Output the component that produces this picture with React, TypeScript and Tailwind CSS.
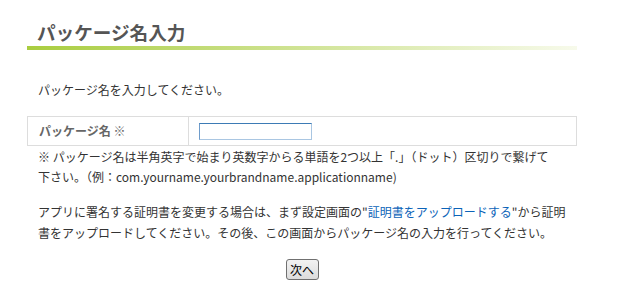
export default function App() {
  return (
    <div
      className="w-[630px] h-[299px] bg-white pt-[20px] text-[12px] text-[#333]"
      style={{ fontFamily: '"Noto Sans CJK JP", "Noto Sans", sans-serif' }}
    >
      <div className="ml-[27px] w-[550px]">
        {/* Title with gradient underline */}
        <h2 className="pl-[10px] text-[18.6px] leading-[24px] font-bold text-[#555]">パッケージ名入力</h2>
        <div className="mt-[2px] h-[4px] bg-[linear-gradient(to_right,#a9cd3f,#f7faeb)]" />

        <p className="mt-[30px] pl-[11px] leading-[20px]">パッケージ名を入力してください。</p>

        {/* Form table */}
        <div className="mt-[16px] flex h-[30px] border border-[#ddd]">
          <div className="w-[161px] flex items-center pl-[11px] border-r border-[#ddd] font-bold text-[#666]">
            パッケージ名 ※
          </div>
          <div className="flex items-center pl-[10px]">
            <input
              type="text"
              className="w-[113px] h-[17px] border border-[#a9c6e2] border-t-[#3d7bb5] border-l-[#6f9ccb] bg-white outline-none"
            />
          </div>
        </div>

        <p className="mt-[1px] pl-[11px] leading-[20px]">
          ※ パッケージ名は半角英字で始まり英数字からる単語を2つ以上「.」（ドット）区切りで繋げて
          <br />
          下さい。（例：com.yourname.yourbrandname.applicationname)
        </p>

        <p className="mt-[14px] pl-[11px] leading-[21px]">
          アプリに署名する証明書を変更する場合は、まず設定画面の"
          <span className="text-[#0b63b8]">証明書をアップロードする</span>"から証明
          <br />
          書をアップロードしてください。その後、この画面からパッケージ名の入力を行ってください。
        </p>

        <div className="mt-[16px] flex justify-center">
          <button className="w-[33px] h-[21px] rounded-[3px] border border-[#707070] bg-[linear-gradient(#f2f2f2,#dcdcdc)] text-[12px] leading-none text-black">
            次へ
          </button>
        </div>
      </div>
    </div>
  )
}
